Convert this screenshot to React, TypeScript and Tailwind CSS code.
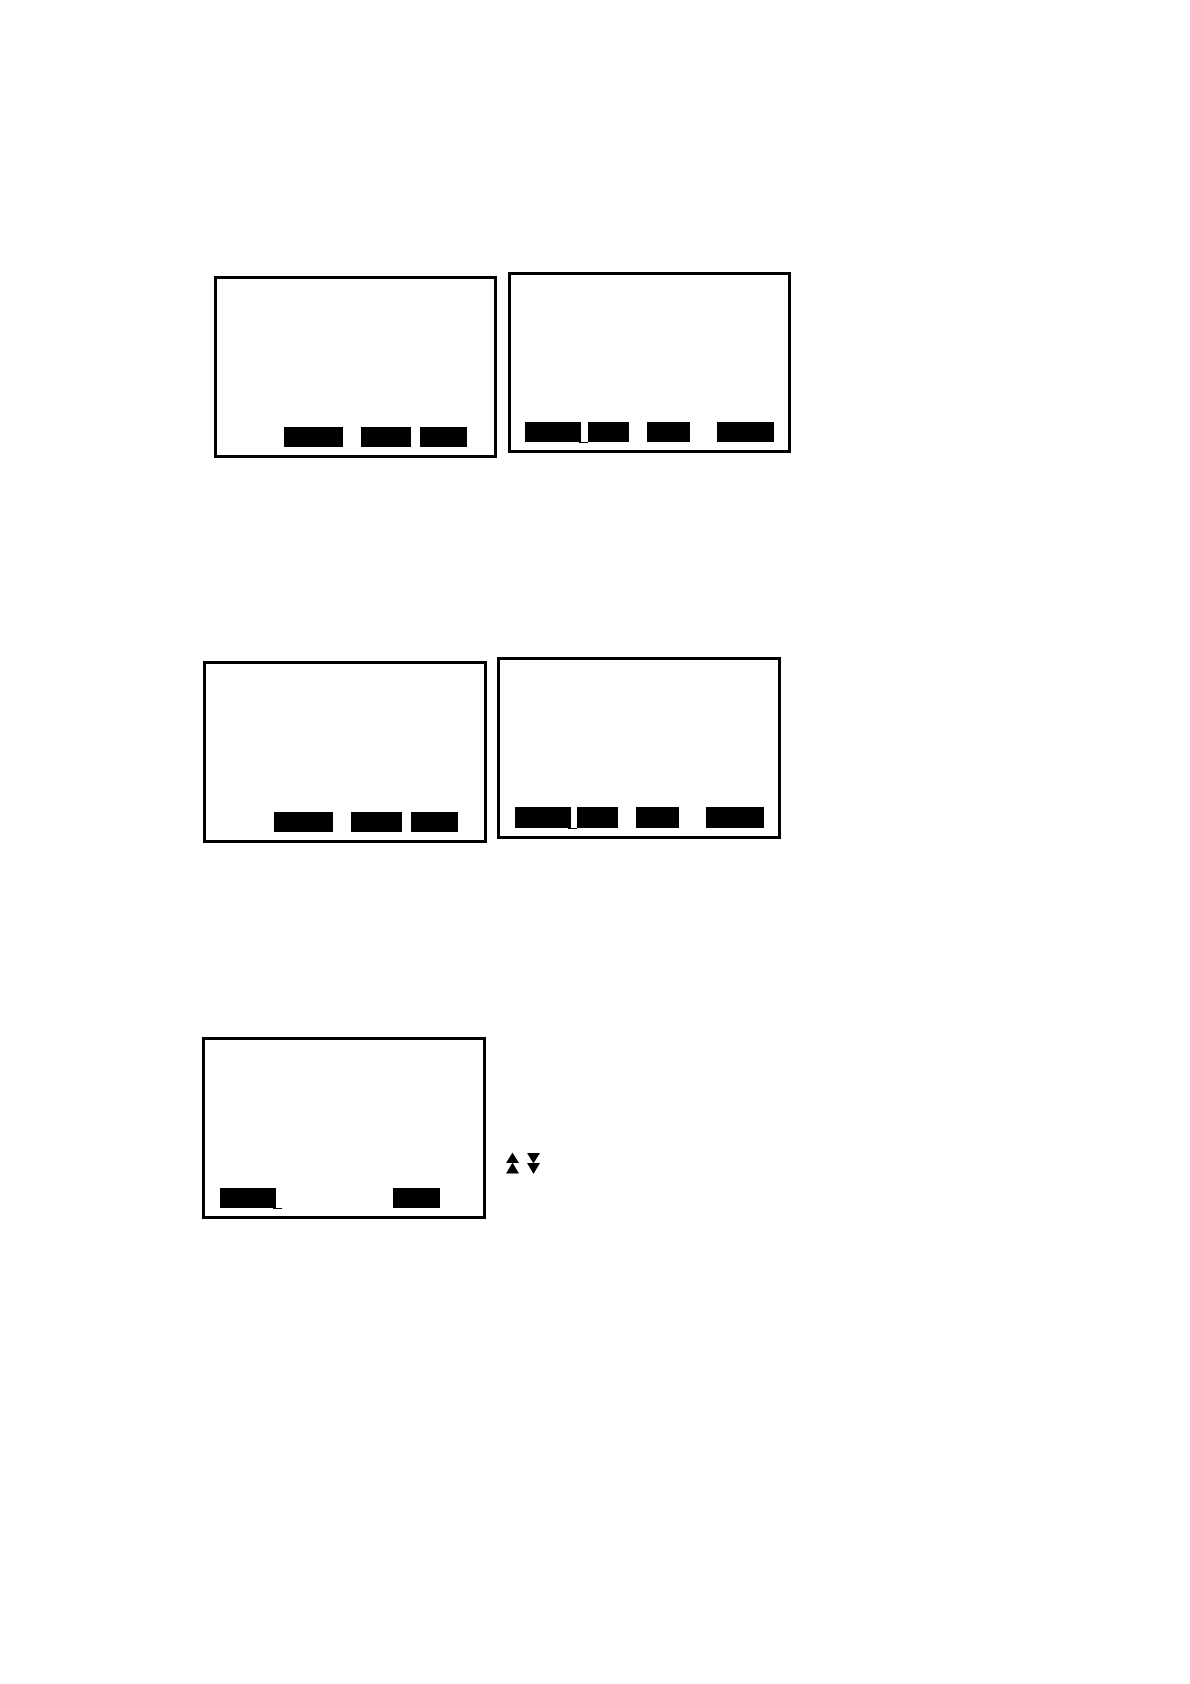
import React from "react";

type Key = { label: string; box: string; cursor?: boolean };

type ScreenProps = { label: string; className: string; keys: Key[]; cursorClass?: string };

function Screen({ label, className, keys, cursorClass = "-right-[6px]" }: ScreenProps) {
  return (
    <div
      role="group"
      aria-label={label}
      className={`flex shrink items-end border-[3px] border-black bg-white pb-2 ${className}`}
    >
      {keys.map((key) => (
        <button
          key={key.label}
          type="button"
          aria-label={key.label}
          className={`relative h-5 shrink-0 bg-black ${key.box}`}
        >
          {key.cursor && (
            <span className={`absolute top-full h-px w-[9px] bg-black ${cursorClass}`} />
          )}
        </button>
      ))}
    </div>
  );
}

export default function App() {
  return (
    <main className="min-h-screen bg-white pt-[272px] pb-16 font-['Liberation_Sans',sans-serif]">
      <section className="flex items-start gap-[11px] pl-[214px]">
        <Screen
          label="Screen 1"
          className="mt-1 h-[182px] w-[283px]"
          keys={[
            { label: "F2", box: "ml-[67px] w-[59px]" },
            { label: "F3", box: "ml-[18px] w-[50px]" },
            { label: "F4", box: "ml-[9px] w-[47px]" },
          ]}
        />
        <Screen
          label="Screen 2"
          className="h-[181px] w-[283px]"
          cursorClass="-right-[7px]"
          keys={[
            { label: "F1", box: "ml-[14px] w-[56px]", cursor: true },
            { label: "F2", box: "ml-[7px] w-[41px]" },
            { label: "F3", box: "ml-[18px] w-[43px]" },
            { label: "F4", box: "ml-[27px] w-[57px]" },
          ]}
        />
      </section>

      <section className="mt-[199px] flex items-start gap-[10px] pl-[203px]">
        <Screen
          label="Screen 3"
          className="mt-1 h-[182px] w-[284px]"
          keys={[
            { label: "F2", box: "ml-[68px] w-[59px]" },
            { label: "F3", box: "ml-[18px] w-[51px]" },
            { label: "F4", box: "ml-[9px] w-[47px]" },
          ]}
        />
        <Screen
          label="Screen 4"
          className="h-[182px] w-[284px] [&>button]:h-[21px]"
          keys={[
            { label: "F1", box: "ml-[15px] w-[56px]", cursor: true },
            { label: "F2", box: "ml-[6px] w-[41px]" },
            { label: "F3", box: "ml-[18px] w-[43px]" },
            { label: "F4", box: "ml-[27px] w-[58px]" },
          ]}
        />
      </section>

      <section className="mt-[194px] flex items-end gap-5 pl-[202px]">
        <Screen
          label="Screen 5"
          className="h-[182px] w-[284px]"
          keys={[
            { label: "F1", box: "ml-[15px] w-[56px]", cursor: true },
            { label: "F4", box: "ml-[117px] w-[47px]" },
          ]}
        />
        <div className="mb-[45px] flex gap-2">
          <svg width="13" height="22" viewBox="0 0 13 22" aria-hidden="true">
            <path d="M6.5 0.5L13 11H0zM6.5 10.5L13 21.5H0z" />
          </svg>
          <svg width="13" height="22" viewBox="0 0 13 22" aria-hidden="true">
            <path d="M0 1H13L6.5 11.5zM0 11H13L6.5 22z" />
          </svg>
        </div>
      </section>
    </main>
  );
}
